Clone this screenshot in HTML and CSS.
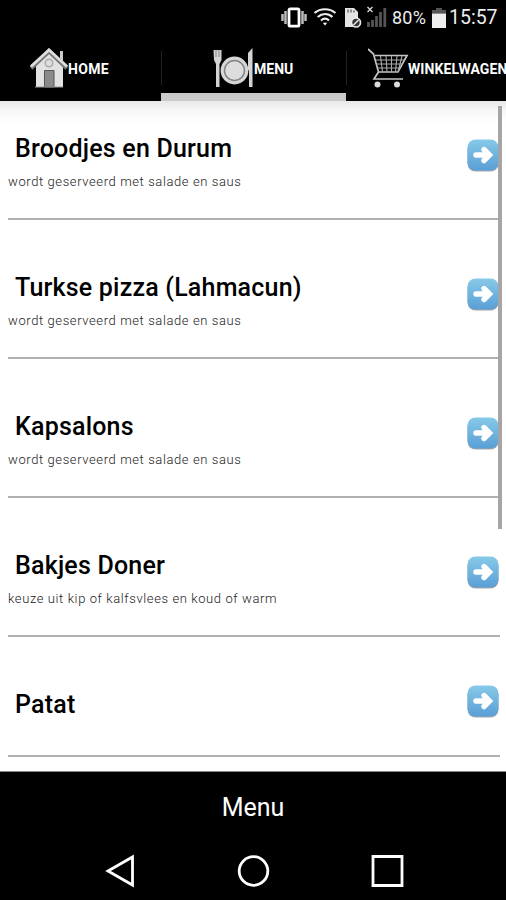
FILE: index.html
```html
<!DOCTYPE html>
<html lang="nl">
<head>
<meta charset="UTF-8">
<meta name="viewport" content="width=device-width, initial-scale=1.0">
<title>Menu</title>
<link rel="stylesheet" href="styles.css">
</head>
<body>
<!-- shared arrow icon -->
<svg class="defs" width="0" height="0">
    <defs>
        <linearGradient id="blue" x1="0" y1="0" x2="0" y2="1">
            <stop offset="0" stop-color="#86c9e8"/>
            <stop offset="1" stop-color="#5a9fd6"/>
        </linearGradient>
        <symbol id="arrow" viewBox="0 0 32 34">
            <rect x="0.5" y="1.5" width="31" height="31" rx="8" fill="#a9a5a8"/>
            <rect x="0.5" y="0.5" width="31" height="31" rx="8" fill="url(#blue)"/>
            <path d="M9 16h12M17 10.5l5.5 5.5-5.5 5.5" fill="none" stroke="#fff" stroke-width="5.4" stroke-linecap="round"/>
        </symbol>
    </defs>
</svg>
<div class="phone">
    <div class="status">
        <svg class="status-icons" width="120" height="36" viewBox="0 0 120 36">
            <path d="M2.5 14v7M5.5 11v13M25.5 14v7M22.5 11v13" stroke="#bbb" stroke-width="2.5"/>
            <rect x="9" y="8.8" width="10" height="17.4" rx="1.5" fill="none" stroke="#fff" stroke-width="2.8"/>
            <path d="M34.5 13c6-5 15-5 21 0M37.7 17c4.5-4 10.5-4 14.7 0M41 20.5c2.6-2.3 5.5-2.3 8 0" fill="none" stroke="#eee" stroke-width="2.2"/>
            <path d="M42.8 22.8h4.4L45 25.5z" fill="#fff"/>
            <path d="M65 8h9l4 4v15H65z" fill="#e4e4e4"/>
            <path d="M68 9.5v3M71 9.5v3M74 10.5v2" stroke="#333"/>
            <circle cx="76" cy="22.5" r="4.5" fill="#333" stroke="#eee" stroke-width="1.6"/>
            <path d="M73.5 25l5-5" stroke="#eee" stroke-width="1.5"/>
            <path d="M87.5 7l5 5M92.500 7l-5 5" stroke="#ddd" stroke-width="1.3"/>
            <path d="M88.5 22v5M92.500 20v7M96.500 16v11M100.500 12v15M104.800 8v19" stroke="#555" stroke-width="2.8"/>
        </svg>
        <span class="percent">80%</span>
        <svg class="battery" width="14" height="20" viewBox="0 0 14 20">
            <path d="M4 0h6v2h4v3.5H0V2h4z" fill="#555"/>
            <path d="M0 5.5h14V20H0z" fill="#eee"/>
        </svg>
        <span class="clock">15:57</span>
    </div>

    <div class="tabs">
        <div class="tab tab-home">
            <svg width="38" height="40" viewBox="0 0 38 40">
                <path d="M30 3h3v12h-3z" fill="#ccc"/>
                <path d="M6 17L19 4l14 13v22H6z" fill="#e2e2e2"/>
                <path d="M1 20L19 3l18 17" fill="none" stroke="#777" stroke-width="4.5"/>
                <path d="M1 18.5L19 2l18 16.5" fill="none" stroke="#dedede" stroke-width="2.8"/>
                <circle cx="19" cy="15" r="3.8" fill="#ddd" stroke="#aaa" stroke-width="1.5"/>
                <path d="M14.5 22.5H24V39h-9.5z" fill="#8a8a8a" stroke="#555"/>
                <path d="M5 39h28" stroke="#999"/>
            </svg>
            <span>HOME</span>
        </div>
        <div class="tab tab-menu active">
            <svg width="41" height="40" viewBox="0 0 41 40">
                <path d="M0.500 2h8v10l-2 4v23H3V16l-2-4z" fill="#d4d4d4"/>
                <path d="M3 2v7M6 2v7" stroke="#777" stroke-width="0.8"/>
                <path d="M39.500 0v39H36V22h-1V5z" fill="#d4d4d4"/>
                <circle cx="21.500" cy="22.500" r="13.9" fill="#d7d7d7"/>
                <circle cx="21.500" cy="22.500" r="10" fill="#ddd" stroke="#848484" stroke-width="1.5"/>
            </svg>
            <span>MENU</span>
        </div>
        <div class="tab tab-cart">
            <svg width="42" height="42" viewBox="0 0 42 42" fill="none" stroke="#aaa">
                <path d="M0 1l5.500 5 5 18-4.500 7h29M7 7.500h32l-9 16.500H10.500" stroke="#c5c5c5" stroke-width="1.7"/>
                <path d="M8 12h29M9 16h26M10 20h23M12.500 8l2 16M18 8l1 16M23.500 8v16M29 8l-1.500 16M34 8l-4 16" stroke-width="1.1"/>
                <circle cx="9.500" cy="36.500" r="3" fill="#ddd" stroke="none"/>
                <circle cx="29" cy="36.500" r="3" fill="#ddd" stroke="none"/>
            </svg>
            <span>WINKELWAGEN</span>
        </div>
    </div>

    <div class="list">
        <div class="item">
            <div class="text">
                <h2>Broodjes en Durum</h2>
                <p>wordt geserveerd met salade en saus</p>
            </div>
            <svg class="arrow"><use href="#arrow"/></svg>
        </div>
        <div class="item">
            <div class="text">
                <h2>Turkse pizza (Lahmacun)</h2>
                <p>wordt geserveerd met salade en saus</p>
            </div>
            <svg class="arrow"><use href="#arrow"/></svg>
        </div>
        <div class="item">
            <div class="text">
                <h2>Kapsalons</h2>
                <p>wordt geserveerd met salade en saus</p>
            </div>
            <svg class="arrow"><use href="#arrow"/></svg>
        </div>
        <div class="item">
            <div class="text">
                <h2>Bakjes Doner</h2>
                <p>keuze uit kip of kalfsvlees en koud of warm</p>
            </div>
            <svg class="arrow"><use href="#arrow"/></svg>
        </div>
        <div class="item short">
            <div class="text">
                <h2>Patat</h2>
            </div>
            <svg class="arrow"><use href="#arrow"/></svg>
        </div>
        <div class="scrollbar"></div>
    </div>

    <div class="title">Menu</div>
    <div class="nav">
        <svg width="32" height="34" viewBox="0 0 32 34"><path d="M4 17L28.500 3v28z"/></svg>
        <svg width="34" height="34" viewBox="0 0 34 34"><circle cx="17.500" cy="17" r="14.3"/></svg>
        <svg width="34" height="34" viewBox="0 0 34 34"><path d="M3 2.500h29v29H3z"/></svg>
    </div>
</div>
</body>
</html>
```
FILE: styles.css
```css
body {
    margin: 0;
    font-family: Roboto, sans-serif;
    background-color: black;
}
h2, p {
    margin: 0;
    white-space: nowrap;
}
.defs {
    position: absolute;
}
.phone {
    width: 506px;
    height: 900px;
    overflow: hidden;
    display: flex;
    flex-direction: column;
    background-color: black;
    color: white;
}
.status {
    height: 36px;
    flex: none;
    display: flex;
    align-items: center;
    padding-left: 280px;
    color: #eee;
}
.status-icons {
    flex: none;
    margin-right: -8px;
}
.percent {
    width: 40px;
    font-size: 18px;
    line-height: 20px;
    letter-spacing: 0.2px;
}
.clock {
    font-size: 19.5px;
    line-height: 20px;
    margin-left: 3px;
}
.battery {
    flex: none;
}
.tabs {
    height: 65px;
    flex: none;
    display: flex;
}
.tab {
    flex: none;
    box-sizing: border-box;
    width: 185px;
    height: 65px;
    display: flex;
    align-items: flex-start;
    padding-top: 12px;
    font-size: 14px;
    font-weight: bold;
    background: linear-gradient(#222, #222) no-repeat 0 15px / 1px 34px;
}
.tab svg {
    flex: none;
}
.tab span {
    line-height: 16px;
    margin-top: 13px;
}
.tab-home {
    width: 161px;
    padding-left: 30px;
    background: none;
}
.tab-home span {
    letter-spacing: 0.3px;
}
.tab-menu {
    padding-left: 52px;
}
.tab-cart {
    padding-left: 22px;
}
.tab-cart span {
    margin-left: -2px;
    letter-spacing: 0.1px;
}
.active {
    border-bottom: 8px solid #cbcbcb;
}
.list {
    position: relative;
    height: 671px;
    flex: none;
    box-sizing: border-box;
    padding: 0 6px 0 8px;
    background: linear-gradient(#e8e8e8, #f8f8f8 10px, #fff 22px);
    border-bottom: 1px solid #888;
    color: black;
}
.item {
    box-sizing: border-box;
    height: 139px;
    display: flex;
    justify-content: space-between;
    padding-top: 53px;
    border-bottom: 2px solid #b0b0b0;
}
.item:first-child {
    height: 119px;
    padding-top: 33px;
}
.item h2 {
    font-size: 25px;
    font-weight: 500;
    line-height: 30px;
    padding-left: 7px;
    letter-spacing: 0.2px;
}
.item p {
    font-size: 13px;
    font-weight: 300;
    line-height: 16px;
    margin-top: 10px;
    letter-spacing: 0.6px;
    color: #222;
}
.arrow {
    width: 32px;
    height: 34px;
    flex: none;
    margin: 5px 1px 0 0;
}
.short {
    height: 120px;
}
.short .arrow {
    margin-top: -5px;
}
.scrollbar {
    position: absolute;
    top: 5px;
    right: 4px;
    width: 4px;
    height: 423px;
    background-color: #a5a5a5;
}
.title {
    height: 70px;
    flex: none;
    line-height: 72px;
    text-align: center;
    font-size: 25px;
}
.nav {
    height: 58px;
    display: flex;
    align-items: center;
    justify-content: space-between;
    padding: 0 102px 0 104px;
}
.nav svg {
    fill: none;
    stroke: white;
    stroke-width: 2.8;
}
```
